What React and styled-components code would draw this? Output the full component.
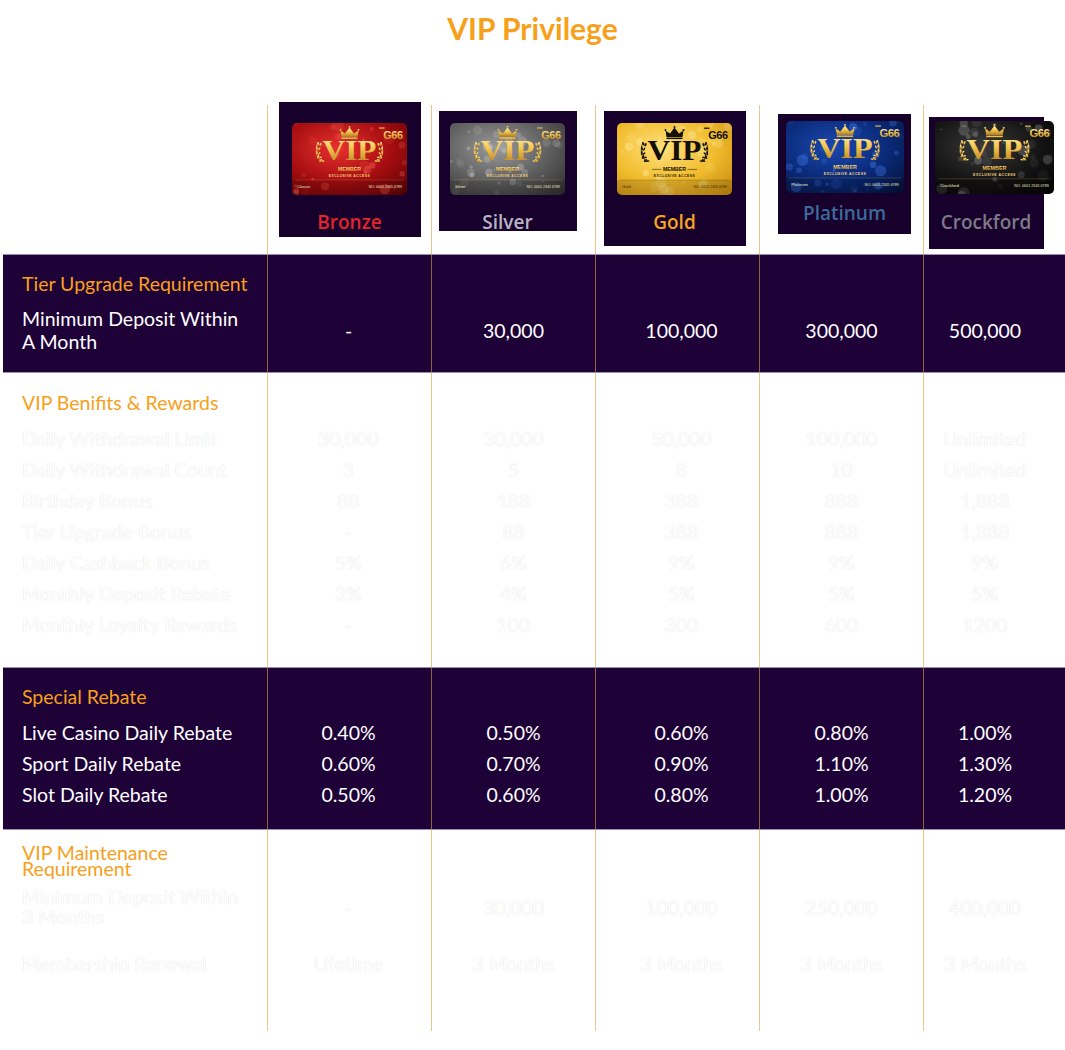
import React from "react";
import styled, { createGlobalStyle } from "styled-components";

const ORANGE = "#f7a01c";
const LINE_LIGHT = "#ecc48e";
const LINE_DARK = "#94623f";
const BAND = "#1e0137";
const BOX = "#17002b";
const COLS = "264px repeat(4, 164px) 139px";

const GlobalStyle = createGlobalStyle`
  body {
    margin: 0;
    background: #fff;
    font-family: Lato, "Open Sans", sans-serif;
  }
`;

const Page = styled.div`
  width: 1065px;
  padding-bottom: 19px;
`;

const Title = styled.h1`
  margin: 0;
  height: 105px;
  padding-top: 10px;
  box-sizing: border-box;
  text-align: center;
  font-size: 30px;
  line-height: 36px;
  font-weight: 700;
  color: ${ORANGE};
`;

const Table = styled.div`
  padding-left: 3px;
`;

const HeaderRow = styled.div`
  display: grid;
  grid-template-columns: ${COLS};
  height: 149px;
`;

const HeaderCell = styled.div`
  border-left: ${(p) => (p.$first ? "none" : `1px solid ${LINE_LIGHT}`)};
  display: flex;
  justify-content: center;
  align-items: flex-start;
`;

const TierBox = styled.div`
  flex: none;
  width: ${(p) => p.$w}px;
  height: ${(p) => p.$h}px;
  margin-top: ${(p) => p.$top}px;
  ${(p) => (p.$dx > 0 ? `margin-left: ${p.$dx * 2}px;` : `margin-right: ${-p.$dx * 2}px;`)}
  padding-top: ${(p) => p.$pt}px;
  box-sizing: border-box;
  background: ${BOX};
  display: flex;
  flex-direction: column;
  align-items: center;
`;

const CardSvg = styled.svg`
  flex: none;
  display: block;
  margin-left: ${(p) => p.$dx * 2}px;
`;

const TierName = styled.div`
  margin-top: ${(p) => p.$mt}px;
  font-family: "Open Sans", sans-serif;
  font-weight: 600;
  font-size: 19px;
  line-height: 22px;
  color: ${(p) => p.$color};
`;

const Section = styled.div`
  --line: ${(p) => (p.$dark ? LINE_DARK : LINE_LIGHT)};
  background: ${(p) => (p.$dark ? BAND : "transparent")};
  border-top: ${(p) => (p.$dark ? "1px solid #9c8fb0" : "none")};
  border-bottom: ${(p) => (p.$dark ? "1px solid #9c8fb0" : "none")};
  color: #fff;
  text-shadow: ${(p) => (p.$dark ? "none" : "0 0 1px rgba(0, 0, 0, 0.17)")};
`;

const Row = styled.div`
  display: grid;
  grid-template-columns: ${COLS};
  & > div {
    padding-top: ${(p) => p.$pt || 0}px;
    padding-bottom: ${(p) => p.$pb || 0}px;
  }
`;

const Label = styled.div`
  padding-left: 19px;
  font-size: 19.5px;
  line-height: ${(p) => p.$lh || 31}px;
`;

const Heading = styled(Label)`
  color: ${ORANGE};
  text-shadow: none;
`;

const Cell = styled.div`
  border-left: 1px solid var(--line);
  display: flex;
  align-items: center;
  justify-content: center;
  font-size: 19.5px;
  line-height: 31px;
  padding-left: ${(p) => Math.max(0, p.$shift * 2)}px;
  padding-right: ${(p) => Math.max(0, -p.$shift * 2)}px;
`;

const SHIFTS = [-1, 0, 4, 0, -8];

function rng(seed) {
  let s = seed;
  return () => {
    s = (s * 9301 + 49297) % 233280;
    return s / 233280;
  };
}

const tiers = [
  { name: "Bronze", label: "Classic", color: "#e1262b", bg: ["#e8312f", "#a50d10", "#5c0205"], bokeh: "#ff6a5a",
    w: 142, h: 135, top: -3, dx: 0, pt: 21, cw: 115, ch: 72, cdx: 0, mt: 16 },
  { name: "Silver", label: "Silver", color: "#b8b4c5", bg: ["#9a9a9a", "#5e5e5e", "#2e2e2e"], bokeh: "#d8d8d8",
    w: 138, h: 120, top: 6, dx: -6, pt: 12, cw: 115, ch: 72, cdx: 0, mt: 16 },
  { name: "Gold", label: "Gold", color: "#f5a524", bg: ["#ffe07a", "#f0bb2c", "#c4880f"], bokeh: "#fff3b0",
    w: 142, h: 135, top: 6, dx: -3, pt: 12, cw: 115, ch: 72, cdx: 0, mt: 16, dark: true },
  { name: "Platinum", label: "Platinum", color: "#3d6a9b", bg: ["#1a48b0", "#0a2a78", "#03123a"], bokeh: "#4f86ff",
    w: 133, h: 120, top: 9, dx: 3, pt: 7, cw: 118, ch: 72, cdx: 0, mt: 9 },
  { name: "Crockford", label: "Crockford", color: "#7c7a86", bg: ["#3a3a3a", "#151515", "#030303"], bokeh: "#9a9a9a",
    w: 115, h: 132, top: 12, dx: -7, pt: 4, cw: 119, ch: 73, cdx: 8, mt: 17 },
].map((t, i) => {
  const r = rng(17 + i * 31);
  const dots = Array.from({ length: 34 }, () => ({
    x: r() * 115,
    y: r() * 72,
    r: 0.8 + r() * 5,
    o: 0.08 + r() * 0.3,
  }));
  return { ...t, dots };
});

function Laurel({ flip, fill }) {
  const leaves = [
    [26.5, 21, -30], [25, 25.5, -10], [24.8, 30, 10], [26, 34, 30], [28.5, 37.5, 50],
  ];
  return (
    <g transform={flip ? "translate(115 0) scale(-1 1)" : undefined}>
      <path d="M30 39 C24.5 35 22.5 28 26 19" stroke={fill} strokeWidth="0.7" fill="none" />
      {leaves.map(([x, y, a], i) => (
        <ellipse key={i} cx={x} cy={y} rx="0.9" ry="2.1" fill={fill} transform={`rotate(${a} ${x} ${y})`} />
      ))}
      {leaves.map(([x, y, a], i) => (
        <ellipse key={`b${i}`} cx={x + 2.2} cy={y + 0.6} rx="0.8" ry="1.8" fill={fill} transform={`rotate(${a + 40} ${x + 2.2} ${y + 0.6})`} />
      ))}
    </g>
  );
}

function VipCard({ t, id }) {
  const gold = `url(#gold-${id})`;
  const main = t.dark ? "#141007" : gold;
  const small = t.dark ? "#2a1c05" : "#f3d27a";
  return (
    <CardSvg width={t.cw} height={t.ch} viewBox="0 0 115 72" preserveAspectRatio="none" $dx={t.cdx}>
      <defs>
        <radialGradient id={`bg-${id}`} cx="40%" cy="35%" r="85%">
          <stop offset="0" stopColor={t.bg[0]} />
          <stop offset="0.55" stopColor={t.bg[1]} />
          <stop offset="1" stopColor={t.bg[2]} />
        </radialGradient>
        <linearGradient id={`gold-${id}`} x1="0" y1="0" x2="0" y2="1">
          <stop offset="0" stopColor="#fff3b2" />
          <stop offset="0.45" stopColor="#f3c64f" />
          <stop offset="1" stopColor="#b07818" />
        </linearGradient>
        <clipPath id={`clip-${id}`}>
          <rect width="115" height="72" rx="5" />
        </clipPath>
      </defs>
      <g clipPath={`url(#clip-${id})`}>
        <rect width="115" height="72" fill={`url(#bg-${id})`} />
        {t.dots.map((d, i) => (
          <circle key={i} cx={d.x} cy={d.y} r={d.r} fill={t.bokeh} opacity={d.o} />
        ))}
        <rect y="57" width="115" height="15" fill="rgba(0,0,0,0.12)" />
      </g>
      <path d="M49.5 14 L48.5 7.5 L53 10.5 L57.5 4.5 L62 10.5 L66.5 7.5 L65.5 14 Z" fill={main} />
      <circle cx="48.5" cy="7" r="1" fill={main} />
      <circle cx="57.5" cy="4" r="1" fill={main} />
      <circle cx="66.5" cy="7" r="1" fill={main} />
      <rect x="49.5" y="14.6" width="16" height="1.5" fill={main} />
      <Laurel fill={main} />
      <Laurel fill={main} flip />
      <text x="57.5" y="37" textAnchor="middle" textLength="54" lengthAdjust="spacingAndGlyphs"
        fontFamily="'Liberation Serif', serif" fontWeight="700" fontSize="29" fill={main}>
        VIP
      </text>
      <line x1="35" y1="46.4" x2="44.5" y2="46.4" stroke={main} strokeWidth="0.5" />
      <line x1="70.5" y1="46.4" x2="80" y2="46.4" stroke={main} strokeWidth="0.5" />
      <text x="57.5" y="48.3" textAnchor="middle" fontFamily="'Liberation Sans', sans-serif" fontWeight="700" fontSize="5.2" fill={main}>
        MEMBER
      </text>
      <text x="57.5" y="53.8" textAnchor="middle" fontFamily="'Liberation Sans', sans-serif" fontWeight="700" fontSize="3.4" letterSpacing="0.45" fill={small}>
        EXCLUSIVE ACCESS
      </text>
      <line x1="3" y1="57" x2="112" y2="57" stroke={small} strokeWidth="0.3" opacity="0.6" />
      <text x="5" y="64.8" fontFamily="'Liberation Sans', sans-serif" fontSize="4.2" fill={t.dark ? "#4a3506" : "#f6eac6"}>
        {t.label}
      </text>
      <text x="110" y="64.8" textAnchor="end" fontFamily="'Liberation Sans', sans-serif" fontSize="3.6" fill={t.dark ? "#3a2804" : "#f6eac6"}>
        NO. 0001 2345 6789
      </text>
      <rect x="87" y="4.6" width="5.5" height="1.2" fill={main} />
      <text x="110.5" y="16" textAnchor="end" fontFamily="'Liberation Sans', sans-serif" fontWeight="700" fontSize="11" letterSpacing="-0.5" fill={main}>
        G66
      </text>
    </CardSvg>
  );
}

const sections = [
  {
    dark: true,
    title: ["Tier Upgrade Requirement"],
    titleLh: 22,
    titlePt: 18,
    pb: 19,
    rows: [
      { label: ["Minimum Deposit Within", "A Month"], lh: 23, pt: 12, values: ["-", "30,000", "100,000", "300,000", "500,000"] },
    ],
  },
  {
    title: ["VIP Benifits & Rewards"],
    titleLh: 22,
    titlePt: 19,
    pb: 27,
    rows: [
      { label: ["Daily Withdrawal Limit"], pt: 9, values: ["30,000", "30,000", "50,000", "100,000", "Unlimited"] },
      { label: ["Daily Withdrawal Count"], values: ["3", "5", "8", "10", "Unlimited"] },
      { label: ["Birthday Bonus"], values: ["88", "188", "388", "888", "1,888"] },
      { label: ["Tier Upgrade Bonus"], values: ["-", "88", "388", "888", "1,888"] },
      { label: ["Daily Cashback Bonus"], values: ["5%", "6%", "9%", "9%", "9%"] },
      { label: ["Monthly Deposit Rebate"], values: ["3%", "4%", "5%", "5%", "5%"] },
      { label: ["Monthly Loyalty Rewards"], values: ["-", "100", "300", "600", "1200"] },
    ],
  },
  {
    dark: true,
    title: ["Special Rebate"],
    titleLh: 22,
    titlePt: 18,
    pb: 19,
    rows: [
      { label: ["Live Casino Daily Rebate"], pt: 9, values: ["0.40%", "0.50%", "0.60%", "0.80%", "1.00%"] },
      { label: ["Sport Daily Rebate"], values: ["0.60%", "0.70%", "0.90%", "1.10%", "1.30%"] },
      { label: ["Slot Daily Rebate"], values: ["0.50%", "0.60%", "0.80%", "1.00%", "1.20%"] },
    ],
  },
  {
    title: ["VIP Maintenance", "Requirement"],
    titleLh: 16,
    titlePt: 15,
    pb: 52,
    rows: [
      { label: ["Minimum Deposit Within", "3 Months"], lh: 20, pt: 10, values: ["-", "30,000", "100,000", "250,000", "400,000"] },
      { label: ["Membership Renewal"], pt: 21, values: ["Lifetime", "3 Months", "3 Months", "3 Months", "3 Months"] },
    ],
  },
];

const lines = (parts) =>
  parts.map((p, i) => (
    <React.Fragment key={i}>
      {i > 0 && <br />}
      {p}
    </React.Fragment>
  ));

const App = () => (
  <Page>
    <GlobalStyle />
    <Title>VIP Privilege</Title>
    <Table>
      <HeaderRow>
        <HeaderCell $first />
        {tiers.map((t, i) => (
          <HeaderCell key={t.name}>
            <TierBox $w={t.w} $h={t.h} $top={t.top} $dx={t.dx} $pt={t.pt}>
              <VipCard t={t} id={i} />
              <TierName $mt={t.mt} $color={t.color}>{t.name}</TierName>
            </TierBox>
          </HeaderCell>
        ))}
      </HeaderRow>

      {sections.map((s, si) => (
        <Section key={si} $dark={s.dark}>
          <Row $pt={s.titlePt}>
            <Heading $lh={s.titleLh}>{lines(s.title)}</Heading>
            {SHIFTS.map((sh, i) => (
              <Cell key={i} $shift={sh} />
            ))}
          </Row>
          {s.rows.map((r, ri) => (
            <Row key={ri} $pt={r.pt} $pb={ri === s.rows.length - 1 ? s.pb : 0}>
              <Label $lh={r.lh}>{lines(r.label)}</Label>
              {r.values.map((v, i) => (
                <Cell key={i} $shift={SHIFTS[i]}>{v}</Cell>
              ))}
            </Row>
          ))}
        </Section>
      ))}
    </Table>
  </Page>
);

export default App;
